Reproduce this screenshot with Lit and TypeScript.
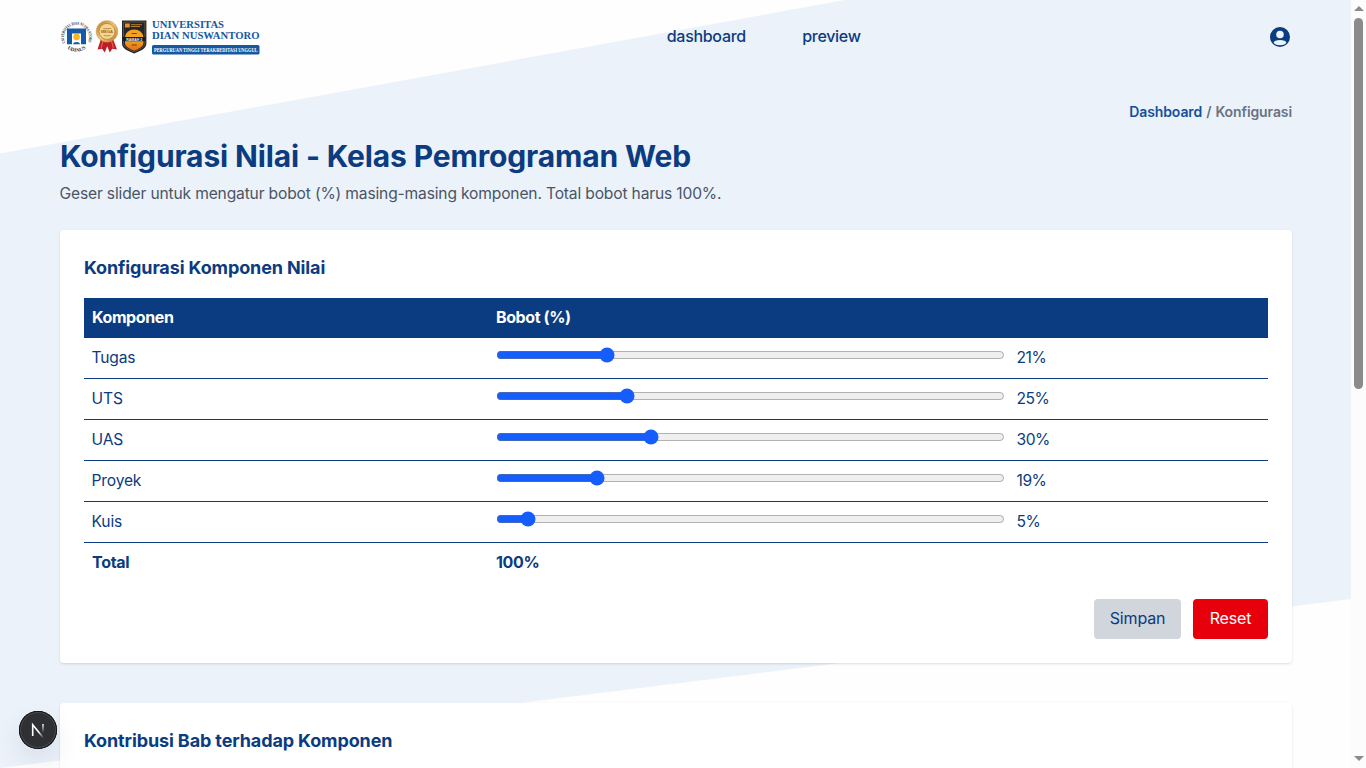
import { LitElement, html, css, svg } from "lit";
import { customElement, property } from "lit/decorators.js";

interface Komponen {
  nama: string;
  bobot: number;
}

const KOMPONEN: Komponen[] = [
  { nama: "Tugas", bobot: 21 },
  { nama: "UTS", bobot: 25 },
  { nama: "UAS", bobot: 30 },
  { nama: "Proyek", bobot: 19 },
  { nama: "Kuis", bobot: 5 },
];

@customElement("campus-logo")
class CampusLogo extends LitElement {
  static styles = css`
    :host { display: block; width: 200px; height: 36px; }
    svg { display: block; overflow: visible; }
    .serif { font-family: "Liberation Serif", serif; font-weight: 700; fill: #1659a0; }
    .ribbon { font-family: "Liberation Serif", serif; font-weight: 700; fill: #fff; }
    .ring { font-family: "Liberation Serif", serif; font-weight: 700; fill: #29313f; }
    .tiny { font-family: "Liberation Sans", sans-serif; font-weight: 700; }
  `;
  render() {
    return html`<svg width="200" height="36" viewBox="0 0 200 36">
      ${svg`
      <defs>
        <path id="arc" d="M5.200 23.600A12.500 12.500 0 1 1 27.800 23.600"/>
        <path id="low" d="M4.500 26.500A14.600 14.600 0 0 0 28.500 26.500"/>
        <linearGradient id="gold" x1="0" y1="0" x2="1" y2="1">
          <stop offset="0" stop-color="#b97824"/><stop offset=".5" stop-color="#edc577"/><stop offset="1" stop-color="#b87625"/>
        </linearGradient>
        <linearGradient id="sun" x1="0" y1="0" x2="0" y2="1">
          <stop offset="0" stop-color="#f0a51f"/><stop offset="1" stop-color="#e96a16"/>
        </linearGradient>
      </defs>
      <text class="ring" font-size="4.300"><textPath href="#arc" textLength="49" lengthAdjust="spacingAndGlyphs">UNIVERSITAS DIAN NUSWANTORO</textPath></text>
      <text class="ring" font-size="5"><textPath href="#low" startOffset="4" textLength="20" lengthAdjust="spacingAndGlyphs">UDINUS</textPath></text>
      <path d="M7 9.500h19v15.800h-5V14.500H12V25.300H7z" fill="#1558a5"/>
      <circle cx="16.600" cy="18" r="3.300" fill="#f9b51b"/>
      <path d="M12.800 25.300a3.800 3 0 0 1 7.400 0z" fill="#1558a5"/>
      <path d="M41 20l-3.500 10.500 4.600-.8 2.700 3.900 2.400-6.400 2.500 6.400 2.600-3.900 4.700.8L53 20z" fill="#bd1e26"/>
      <path d="M43 22l-1.800 6.800M51.500 22l2 6.800" stroke="#ef5a50" stroke-width="1.200"/>
      <circle cx="47" cy="12.400" r="10.700" fill="url(#gold)" stroke="#cf9a46" stroke-width="1" stroke-dasharray="1.200 .7"/>
      <circle cx="47" cy="12.400" r="8" fill="#f4d694" stroke="#ae782b" stroke-width=".7"/>
      <text class="tiny" x="47" y="14" font-size="4" text-anchor="middle" fill="#a06719">MEGA</text>
      <path d="M43.200 9.600h8M43.700 16.700h7" stroke="#b47d2d" stroke-width=".8"/>
      <path d="M62 1.500h24.400v23c0 5-5.800 7.500-12.200 10-6.400-2.500-12.200-5-12.200-10z" fill="#24262a"/>
      <path d="M63.500 3h21.400v21c0 4-5 6.300-10.700 8.800-5.700-2.500-10.700-4.800-10.700-8.800z" fill="none" stroke="#a07c35" stroke-width=".5"/>
      <path d="M65 4.500h4.800v4H65z" fill="#ef8d20"/>
      <path d="M71 5.700h11M71 7.500h9" stroke="#c58b37" stroke-width=".9"/>
      <path d="M65 18a9.200 7.500 0 0 1 18.400 0z" fill="#f2a322"/>
      <path d="M65 21h18.400v3c0 3.800-4.300 5.500-9.200 7.800-4.900-2.300-9.200-4-9.200-7.800z" fill="url(#sun)"/>
      <path d="M63 18h22.400v4.200H63z" fill="#191c20"/>
      <text class="tiny" x="74.200" y="21.600" font-size="4" text-anchor="middle" textLength="16" lengthAdjust="spacingAndGlyphs" fill="#f5f0e4">RAMAH 3</text>
      <path d="M71.700 14.500h5M71.700 26h5" stroke="#69451d" stroke-width="1.200"/>
      <text class="serif" x="92" y="9.400" font-size="11.400" textLength="72" lengthAdjust="spacingAndGlyphs">UNIVERSITAS</text>
      <text class="serif" x="92" y="20.300" font-size="11.400" textLength="107.500" lengthAdjust="spacingAndGlyphs">DIAN NUSWANTORO</text>
      <rect x="92" y="26" width="107.500" height="9.600" rx="1.500" fill="#1659a0"/>
      <text class="ribbon" x="94" y="32.600" font-size="5.400" textLength="103.500" lengthAdjust="spacingAndGlyphs">PERGURUAN TINGGI TERAKREDITASI UNGGUL</text>
      `}
    </svg>`;
  }
}

@customElement("bobot-row")
class BobotRow extends LitElement {
  @property() nama = "";
  @property({ type: Number }) bobot = 0;

  static styles = css`
    :host {
      display: grid; grid-template-columns: 403.600px 1fr; height: 41px; padding: 8px;
      border-bottom: 1px solid #0b3b80; line-height: 23px;
      font-size: 15.600px; letter-spacing: -.2px;
    }
    .cell { display: flex; align-items: flex-start; }
    input { width: 509px; height: 16px; margin: 1px 12px 0 0; accent-color: #155dfc; }
    .name { margin-left: -.4px; }
    .value { letter-spacing: -.5px; }
  `;
  render() {
    return html`<span class="name">${this.nama}</span>
      <div class="cell">
        <input type="range" min="0" max="100" .value=${String(this.bobot)} />
        <span class="value">${this.bobot}%</span>
      </div>`;
  }
}

@customElement("app-root")
class AppRoot extends LitElement {
  static styles = css`
    * { box-sizing: border-box; }
    :host {
      display: flex; width: 100%; height: 768px; overflow: hidden; position: relative;
      font-family: Inter, "Liberation Sans", sans-serif; font-size: 16px; line-height: 24px;
      color: #0b3b80; background: #fdfdfd;
    }
    .page {
      flex: 1; min-width: 0; height: 768px; overflow: hidden; padding: 0 59px 0 60px;
      background: #fefefe;
      isolation: isolate; position: relative;
    }
    .backdrop { position: absolute; inset: 0; z-index: -1; display: block; }
    header { display: flex; align-items: center; justify-content: space-between; height: 74px; }
    nav { display: flex; gap: 56px; padding-bottom: 2px; font-weight: 500; }
    nav span { width: 79.500px; letter-spacing: -.3px; white-space: nowrap; }
    nav span + span { width: 59px; }
    .user { display: block; }
    .crumbs {
      display: flex; justify-content: flex-end; gap: 4px; margin-top: 28px;
      font-size: 14px; line-height: 20px; font-weight: 600; color: #6a7282; letter-spacing: -.1px;
    }
    .crumbs .link { color: #14509a; }
    h1 { margin: 16px 0 8px; font-size: 30px; line-height: 36px; font-weight: 700; letter-spacing: -.14px; }
    p {
      margin: 0 0 0 -.5px; color: #4a5565; white-space: nowrap;
      font-size: 15.600px; letter-spacing: -.16px; line-height: 23px; padding-bottom: 1px;
    }
    .card {
      background: #fff; border-radius: 4px; padding: 24px; margin: 24px 0 40px;
      box-shadow: 0 1px 3px rgba(0,0,0,.1), 0 1px 2px -1px rgba(0,0,0,.1);
    }
    h2 { margin: 0 0 16px; font-size: 18px; line-height: 28px; font-weight: 700; letter-spacing: -.12px; white-space: nowrap; }
    .head, .total { display: grid; grid-template-columns: 404px 1fr; padding: 8px; height: 40px; line-height: 23px; font-weight: 700; }
    .head { background: #0b3b80; color: #fff; letter-spacing: -.4px; }
    .total { letter-spacing: -.3px; }
    .actions { display: flex; justify-content: flex-end; gap: 12px; margin-top: 16px; }
    button {
      font: inherit; border: 0; border-radius: 4px; height: 40px; padding: 0 0 2px; color: #0b3b80;
      background: #d1d5dc; width: 87px; letter-spacing: -.15px;
    }
    .reset { background: #e7000b; color: #fff; width: 75px; }
    .scrollbar {
      width: 15px; height: 768px; background: #fcfcfc; display: flex; flex-direction: column;
      align-items: center;
    }
    .up, .down { border: 5px solid transparent; }
    .up { border-top: 0; border-bottom-color: #8b8b8b; margin: 6px 0 7px; }
    .down { border-bottom: 0; border-top-color: #8b8b8b; margin: auto 0 7px; }
    .thumb { width: 9px; height: 371px; border-radius: 5px; background: #8b8b8b; }
    .dev {
      position: absolute; left: 19px; top: 711px; width: 38px; height: 38px; border-radius: 50%;
      background: #2e3033;
      box-shadow: inset 0 0 0 1px #111, inset 0 0 0 2px #4b4b4b, 0 12px 28px rgba(0,0,40,.09);
    }
    .dev svg { display: block; }
  `;

  render() {
    return html`
      <main class="page">
        <svg class="backdrop" width="1351" height="768" viewBox="0 0 1351 768">
          <path d="M0 153.600L845 0H1351V599L0 768z" fill="#ebf2fa" />
        </svg>
        <header>
          <campus-logo></campus-logo>
          <nav><span>dashboard</span><span>preview</span></nav>
          <svg class="user" width="24" height="24" viewBox="0 0 24 24">
            <circle cx="12" cy="12" r="10" fill="#0b3b80" />
            <circle cx="12" cy="9.500" r="3.800" fill="#ebf2fa" />
            <ellipse cx="12" cy="17.600" rx="6.200" ry="2.600" fill="#ebf2fa" />
          </svg>
        </header>
        <div class="crumbs"><span class="link">Dashboard</span><span>/</span><span>Konfigurasi</span></div>
        <h1>Konfigurasi Nilai - Kelas Pemrograman Web</h1>
        <p>Geser slider untuk mengatur bobot (%) masing-masing komponen. Total bobot harus 100%.</p>
        <section class="card">
          <h2>Konfigurasi Komponen Nilai</h2>
          <div class="head"><span>Komponen</span><span>Bobot (%)</span></div>
          ${KOMPONEN.map((k) => html`<bobot-row .nama=${k.nama} .bobot=${k.bobot}></bobot-row>`)}
          <div class="total"><span>Total</span><span>100%</span></div>
          <div class="actions"><button>Simpan</button><button class="reset">Reset</button></div>
        </section>
        <section class="card">
          <h2>Kontribusi Bab terhadap Komponen</h2>
        </section>
      </main>
      <div class="scrollbar">
        <div class="up"></div>
        <div class="thumb"></div>
        <div class="down"></div>
      </div>
      <div class="dev">
        <svg width="38" height="38" viewBox="0 0 38 38" fill="none">
          <defs>
            <linearGradient id="diag" x1="21" y1="20" x2="25.500" y2="26" gradientUnits="userSpaceOnUse">
              <stop stop-color="#fff" /><stop offset="1" stop-color="#fff" stop-opacity="0" />
            </linearGradient>
            <linearGradient id="stem" x1="0" y1="13" x2="0" y2="22" gradientUnits="userSpaceOnUse">
              <stop stop-color="#fff" /><stop offset="1" stop-color="#fff" stop-opacity="0" />
            </linearGradient>
          </defs>
          <path d="M13.700 25V13.700L24.500 27" stroke="url(#diag)" stroke-width="1.600" />
          <path d="M24 13v9" stroke="url(#stem)" stroke-width="1.500" />
        </svg>
      </div>
    `;
  }
}
